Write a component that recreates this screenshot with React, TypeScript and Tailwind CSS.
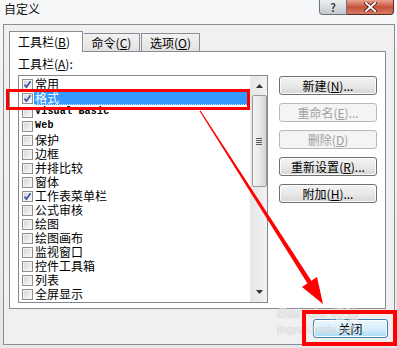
import React from "react";

type Item = { label: string; checked?: boolean; selected?: boolean; latin?: boolean };

const items: Item[] = [
  { label: "常用", checked: true },
  { label: "格式", checked: true, selected: true },
  { label: "Visual Basic", latin: true },
  { label: "Web", latin: true },
  { label: "保护" },
  { label: "边框" },
  { label: "并排比较" },
  { label: "窗体" },
  { label: "工作表菜单栏", checked: true },
  { label: "公式审核" },
  { label: "绘图" },
  { label: "绘图画布" },
  { label: "监视窗口" },
  { label: "控件工具箱" },
  { label: "列表" },
  { label: "全屏显示" },
];

const buttons = [
  { pre: "新建", key: "N", post: ")...", disabled: false },
  { pre: "重命名", key: "E", post: ")...", disabled: true },
  { pre: "删除", key: "D", post: ")", disabled: true },
  { pre: "重新设置", key: "R", post: ")...", disabled: false },
  { pre: "附加", key: "H", post: ")...", disabled: false },
];

function CheckBox({ checked }: { checked?: boolean }) {
  return (
    <div className="w-[11px] h-[11px] shrink-0 border border-[#8f8f8f] bg-gradient-to-br from-[#d2d4d8] to-[#fafafa] shadow-[inset_0_0_0_1px_#f4f4f4] flex items-center justify-center">
      {checked && (
        <svg width="9" height="9" viewBox="0 0 9 9">
          <path d="M1.5 4.6 L3.4 7 L7.6 1.3" fill="none" stroke="#3a5a9e" strokeWidth="1.7" />
        </svg>
      )}
    </div>
  );
}

function Row({ item }: { item: Item }) {
  return (
    <div className="h-[14px] flex items-center pl-[3px]">
      <CheckBox checked={item.checked} />
      <div
        className={`ml-[1px] h-[14px] flex items-center pl-[1px] ${
          item.selected ? "flex-1 mr-[2px] bg-[#3399ff] text-white border-b border-dotted border-[#c9e2ff]" : "text-black"
        }`}
      >
        {item.latin ? (
          <span className="font-['Liberation_Mono',monospace] text-[10px] leading-[14px] font-bold tracking-[0.2px]">
            {item.label}
          </span>
        ) : (
          <span className="text-[12px] leading-[14px]">{item.label}</span>
        )}
      </div>
    </div>
  );
}

function Scrollbar() {
  return (
    <div className="w-[17px] h-full bg-gradient-to-r from-[#e6e6e6] to-[#f2f2f2] border-l border-[#e9e9e9] flex flex-col items-center">
      <div className="h-[17px] w-full flex items-center justify-center pt-[3px]">
        <svg width="7" height="4" viewBox="0 0 7 4">
          <path d="M0 4 L3.5 0 L7 4 Z" fill="#333" />
        </svg>
      </div>
      <div className="mt-[2px] h-[92px] w-[15px] rounded-[2px] border border-[#9a9a9a] bg-gradient-to-r from-[#f4f4f4] via-[#e8e8e8] to-[#d4d4d4] flex items-center justify-center">
        <div className="flex flex-col gap-[1px]">
          <div className="w-[6px] h-[1px] bg-[#5a5a5a]" />
          <div className="w-[6px] h-[1px] bg-[#5a5a5a]" />
          <div className="w-[6px] h-[1px] bg-[#5a5a5a]" />
          <div className="w-[6px] h-[1px] bg-[#5a5a5a]" />
        </div>
      </div>
      <div className="mt-auto h-[17px] w-full flex items-center justify-center pb-[4px]">
        <svg width="7" height="4" viewBox="0 0 7 4">
          <path d="M0 0 L3.5 4 L7 0 Z" fill="#333" />
        </svg>
      </div>
    </div>
  );
}

function Button({ b }: { b: (typeof buttons)[number] }) {
  return (
    <div
      className={`h-[19px] w-[98px] rounded-[3px] border flex items-center justify-center text-[12px] leading-[14px] ${
        b.disabled
          ? "border-[#b5b9bd] bg-[#f4f4f4] text-[#a0a0a0]"
          : "border-[#707070] bg-gradient-to-b from-[#f4f4f4] via-[#e9e9e9] to-[#d6d6d6] text-black shadow-[inset_0_0_0_1px_#fcfcfc]"
      }`}
    >
      {b.pre}(<span className="underline">{b.key}</span>
      {b.post}
    </div>
  );
}

export default function App() {
  return (
    <div className="relative w-[397px] h-[348px] overflow-hidden bg-gradient-to-b from-[#f6f7f8] via-[#eceef0] to-[#e4e6e9] font-['Noto_Sans_CJK_SC',sans-serif] leading-[14px] text-black">
      {/* title bar */}
      <div className="h-[24px] flex items-start">
        <div className="pl-[4px] pt-[2px] text-[12px] leading-[14px] text-[#111] [text-shadow:0_0_5px_#ffffff,0_0_2px_#ffffff]">
          自定义
        </div>
        <div className="ml-auto mr-[3px] flex">
          <div className="w-[28px] h-[15px] rounded-bl-[4px] border border-t-0 border-[#6e737a] bg-gradient-to-b from-[#eef0f2] via-[#d9dde2] to-[#c3c8ce] flex items-center justify-center text-[11px] font-bold leading-[13px] text-[#3d3d3d] [text-shadow:0_0_2px_#fff]">
            ?
          </div>
          <div className="w-[47px] h-[15px] rounded-br-[4px] border border-t-0 border-l-0 border-[#5a2b24] bg-gradient-to-b from-[#e7a493] via-[#c7503b] to-[#d77a66] flex items-center justify-center">
            <svg width="13" height="10" viewBox="0 0 13 10">
              <path d="M2 1 L11 9 M11 1 L2 9" stroke="#4a1a12" strokeWidth="3.6" strokeLinecap="square" />
              <path d="M2 1 L11 9 M11 1 L2 9" stroke="#ffffff" strokeWidth="2" strokeLinecap="square" />
            </svg>
          </div>
        </div>
      </div>

      {/* client area */}
      <div className="ml-[3px] w-[392px] h-[321px] border border-[#8a8e93] bg-[#f0f0f0] flex flex-col pl-[5px] pt-[6px]">
        {/* tabs */}
        <div className="flex items-end h-[20px]">
          <div className="relative z-10 -mb-px w-[74px] h-[21px] border border-b-0 border-[#898c95] bg-white flex items-center pl-[8px] text-[12px]">
            工具栏(<span className="underline">B</span>)
          </div>
          <div className="ml-[1px] w-[56px] h-[18px] border border-b-0 border-l-0 border-[#898c95] bg-gradient-to-b from-[#f2f2f2] to-[#e1e1e1] flex items-center justify-center text-[12px]">
            命令(<span className="underline">C</span>)
          </div>
          <div className="ml-[1px] w-[59px] h-[18px] border border-b-0 border-[#898c95] bg-gradient-to-b from-[#f2f2f2] to-[#e1e1e1] flex items-center justify-center text-[12px]">
            选项(<span className="underline">O</span>)
          </div>
        </div>

        {/* tab panel */}
        <div className="w-[377px] h-[258px] border border-[#898c95] bg-white pl-[8px] pt-[5px]">
          <div className="h-[14px] text-[12px]">
            工具栏(<span className="underline">A</span>):
          </div>
          <div className="mt-[4px] flex">
            <div className="w-[250px] h-[228px] border border-[#828790] bg-white flex">
              <div className="flex-1 pt-[1px] flex flex-col">
                {items.map((it) => (
                  <Row key={it.label} item={it} />
                ))}
              </div>
              <Scrollbar />
            </div>
            <div className="ml-[11px] mt-[1px] flex flex-col gap-[8px]">
              {buttons.map((b) => (
                <Button key={b.pre} b={b} />
              ))}
            </div>
          </div>
        </div>

        {/* bottom */}
        <div className="flex justify-end mt-[10px] mr-[6px]">
          <div className="w-[75px] h-[19px] rounded-[3px] border border-[#3c7fb1] bg-gradient-to-b from-[#eaf6fd] via-[#d9f0fc] to-[#a7d9f5] shadow-[inset_0_0_0_1px_#ffffff] flex items-center justify-center text-[12px]">
            关闭
          </div>
        </div>
      </div>

      {/* watermark */}
      <div className="absolute left-[277px] top-[305px] flex flex-col items-start opacity-70 pointer-events-none">
        <div className="flex items-end text-[#e2e2e2] [text-shadow:0_0_1px_#bdbdbd]">
          <span className="font-['Liberation_Sans',sans-serif] font-bold italic text-[15px] leading-[16px]">Bai</span>
          <span className="font-['Liberation_Sans',sans-serif] font-bold italic text-[15px] leading-[16px] ml-[8px]">du</span>
          <span className="text-[14px] leading-[16px] ml-[4px]">经验</span>
        </div>
        <div className="mt-[4px] font-['Liberation_Sans',sans-serif] text-[10px] leading-[10px] text-[#dcdcdc] [text-shadow:0_0_1px_#c4c4c4]">
          jingyan.baidu.com
        </div>
      </div>

      {/* annotations */}
      <div className="absolute left-[6px] top-[89px] w-[244px] h-[21px] border-[3px] border-[#ff0000]" />
      <div className="absolute left-[302px] top-[310px] w-[95px] h-[36px] border-[4px] border-[#ff0000]" />
      <svg className="absolute left-0 top-0" width="397" height="348" viewBox="0 0 397 348">
        <polygon points="199.5,111 200.5,110.5 311.5,281 307.5,283.5" fill="#ff0000" />
        <polygon points="323,304 302,287 317,277" fill="#ff0000" />
      </svg>
    </div>
  );
}
